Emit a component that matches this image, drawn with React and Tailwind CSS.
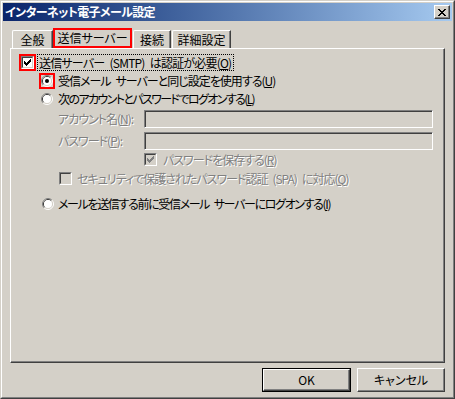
import React from "react";

const F = "font-['Noto_Sans_CJK_JP','Noto_Sans_CJK_SC',sans-serif] [font-feature-settings:'palt']";
const SP = "\u2002";

function U({ children }) {
  return <span className="underline underline-offset-[1px]">{children}</span>;
}

function CheckMark({ color }) {
  const cols = [2, 3, 4, 3, 2, 1, 0];
  return (
    <svg width="7" height="7" viewBox="0 0 7 7" shapeRendering="crispEdges">
      {cols.map((y, x) => (
        <rect key={x} x={x} y={y} width="1" height="3" fill={color} />
      ))}
    </svg>
  );
}

function Check({ checked, disabled }) {
  return (
    <div className="w-[13px] h-[13px] border border-t-[#808080] border-l-[#808080] border-r-white border-b-white shrink-0">
      <div
        className={`w-full h-full border border-t-[#404040] border-l-[#404040] border-r-[#d4d0c8] border-b-[#d4d0c8] flex items-center justify-center ${
          disabled ? "bg-[#d4d0c8]" : "bg-white"
        }`}
      >
        {checked && <CheckMark color={disabled ? "#808080" : "#000"} />}
      </div>
    </div>
  );
}

function Radio({ checked }) {
  return (
    <svg width="12" height="12" viewBox="0 0 12 12" className="shrink-0">
      <path d="M2.11 9.89 A5.5 5.5 0 0 1 9.89 2.11" stroke="#808080" strokeWidth="1" fill="none" />
      <path d="M9.89 2.11 A5.5 5.5 0 0 1 2.11 9.89" stroke="#ffffff" strokeWidth="1" fill="none" />
      <path d="M2.82 9.18 A4.5 4.5 0 0 1 9.18 2.82" stroke="#404040" strokeWidth="1" fill="none" />
      <path d="M9.18 2.82 A4.5 4.5 0 0 1 2.82 9.18" stroke="#d4d0c8" strokeWidth="1" fill="none" />
      <circle cx="6" cy="6" r="4" fill="#ffffff" />
      {checked && <circle cx="6" cy="6" r="2" fill="#000" />}
    </svg>
  );
}

function CloseX() {
  const rows = [
    [0, 1, 6, 7],
    [1, 2, 5, 6],
    [2, 3, 4, 5],
    [3, 4],
    [2, 3, 4, 5],
    [1, 2, 5, 6],
    [0, 1, 6, 7],
  ];
  return (
    <svg width="8" height="7" viewBox="0 0 8 7" shapeRendering="crispEdges">
      {rows.map((r, y) =>
        r.map((x) => <rect key={`${x}-${y}`} x={x} y={y} width="1" height="1" fill="#000" />)
      )}
    </svg>
  );
}

const dis = "text-[#808080] [text-shadow:1px_1px_0_#ffffff]";
const tab =
  "h-[18px] border-t border-l border-r border-t-white border-l-white border-r-[#404040] shadow-[inset_-1px_0_0_#808080] rounded-tl-[2px] flex items-center justify-center";
const input =
  "w-[289px] h-[18px] border border-t-[#808080] border-l-[#808080] border-r-white border-b-white shadow-[inset_1px_1px_0_#404040] bg-[#d4d0c8]";
const raised =
  "border border-t-white border-l-white border-r-[#404040] border-b-[#404040] shadow-[inset_-1px_-1px_0_#808080]";

export default function App() {
  return (
    <div
      className={`${F} w-[455px] h-[399px] bg-[#d4d0c8] border border-t-[#d4d0c8] border-l-[#d4d0c8] border-r-[#404040] border-b-[#404040] text-[12px] leading-[14px] text-black select-none whitespace-pre`}
    >
      <div className="w-full h-full border border-t-white border-l-white border-r-[#808080] border-b-[#808080] p-px flex flex-col">
        {/* Title bar */}
        <div className="h-[18px] shrink-0 bg-gradient-to-r from-[#0a246a] to-[#a6caf0] flex items-center justify-between pl-[2px] pr-[2px]">
          <span className="text-white font-bold text-[12px] tracking-[-0.6px]">インターネット電子メール設定</span>
          <div className={`w-[16px] h-[14px] bg-[#d4d0c8] ${raised} flex items-center justify-center`}>
            <CloseX />
          </div>
        </div>

        {/* Body */}
        <div className="flex-1 flex flex-col px-[7px] pt-[7px]">
          {/* Tabs */}
          <div className="h-[20px] flex items-end pl-[2px]">
            <div className={`w-[41px] ${tab}`}>全般</div>
            <div className="w-[79px] h-[20px] border-2 border-[#ff0000] flex items-center justify-center">
              送信サーバー
            </div>
            <div className={`ml-[1px] w-[38px] ${tab}`}>接続</div>
            <div className={`ml-[1px] w-[59px] ${tab}`}>詳細設定</div>
          </div>

          {/* Panel */}
          <div className={`h-[315px] ${raised} flex flex-col tracking-[-1px]`}>
            {/* Row 1 */}
            <div className="mt-[5px] h-[17px] flex items-center ml-[8px]">
              <div className="w-[17px] h-[17px] border-2 border-[#ff0000] flex items-center justify-center">
                <Check checked />
              </div>
              <div className="ml-[1px] h-[17px] border border-dotted border-black flex items-center pl-px pr-[2px] tracking-[-0.8px]">
                {`送信サーバー${SP}(SMTP)${SP}は認証が必要(`}<U>O</U>)
              </div>
            </div>

            {/* Row 2 */}
            <div className="mt-[2px] h-[16px] flex items-center ml-[28px]">
              <div className="w-[16px] h-[16px] border-2 border-[#ff0000] flex items-center justify-center">
                <Radio checked />
              </div>
              <span className="ml-[3px]">
                {`受信メール${SP}サーバーと同じ設定を使用する(`}<U>U</U>)
              </span>
            </div>

            {/* Row 3 */}
            <div className="mt-[2px] h-[16px] flex items-center ml-[30px]">
              <Radio />
              <span className="ml-[5px] tracking-[-1.6px]">
                次のアカウントとパスワードでログオンする(<U>L</U>)
              </span>
            </div>

            {/* Row 4 */}
            <div className="mt-[3px] h-[18px] flex items-center ml-[47px]">
              <span className={`w-[86px] ${dis}`}>
                アカウント名(<U>N</U>):
              </span>
              <div className={input} />
            </div>

            {/* Row 5 */}
            <div className="mt-[4px] h-[18px] flex items-center ml-[47px]">
              <span className={`w-[86px] ${dis}`}>
                パスワード(<U>P</U>):
              </span>
              <div className={input} />
            </div>

            {/* Row 6 */}
            <div className="mt-[3px] h-[13px] flex items-center ml-[133px]">
              <Check checked disabled />
              <span className={`ml-[6px] ${dis}`}>
                パスワードを保存する(<U>R</U>)
              </span>
            </div>

            {/* Row 7 */}
            <div className="mt-[6px] h-[13px] flex items-center ml-[48px]">
              <Check disabled />
              <span className={`ml-[5px] ${dis}`}>
                {`セキュリティで保護されたパスワード認証${SP}(SPA)${SP}に対応(`}<U>Q</U>)
              </span>
            </div>

            {/* Row 8 */}
            <div className="mt-[12px] h-[13px] flex items-center ml-[31px]">
              <Radio />
              <span className="ml-[4px] tracking-[-1.35px]">
                {`メールを送信する前に受信メール${SP}サーバーにログオンする(`}<U>I</U>)
              </span>
            </div>
          </div>

          {/* Buttons */}
          <div className="mt-[5px] flex justify-end gap-[6px]">
            <div className="w-[89px] h-[24px] border border-black">
              <div className={`w-full h-full ${raised} flex items-center justify-center`}>OK</div>
            </div>
            <div className={`w-[88px] h-[24px] ${raised} flex items-center justify-center`}>キャンセル</div>
          </div>
        </div>
      </div>
    </div>
  );
}
